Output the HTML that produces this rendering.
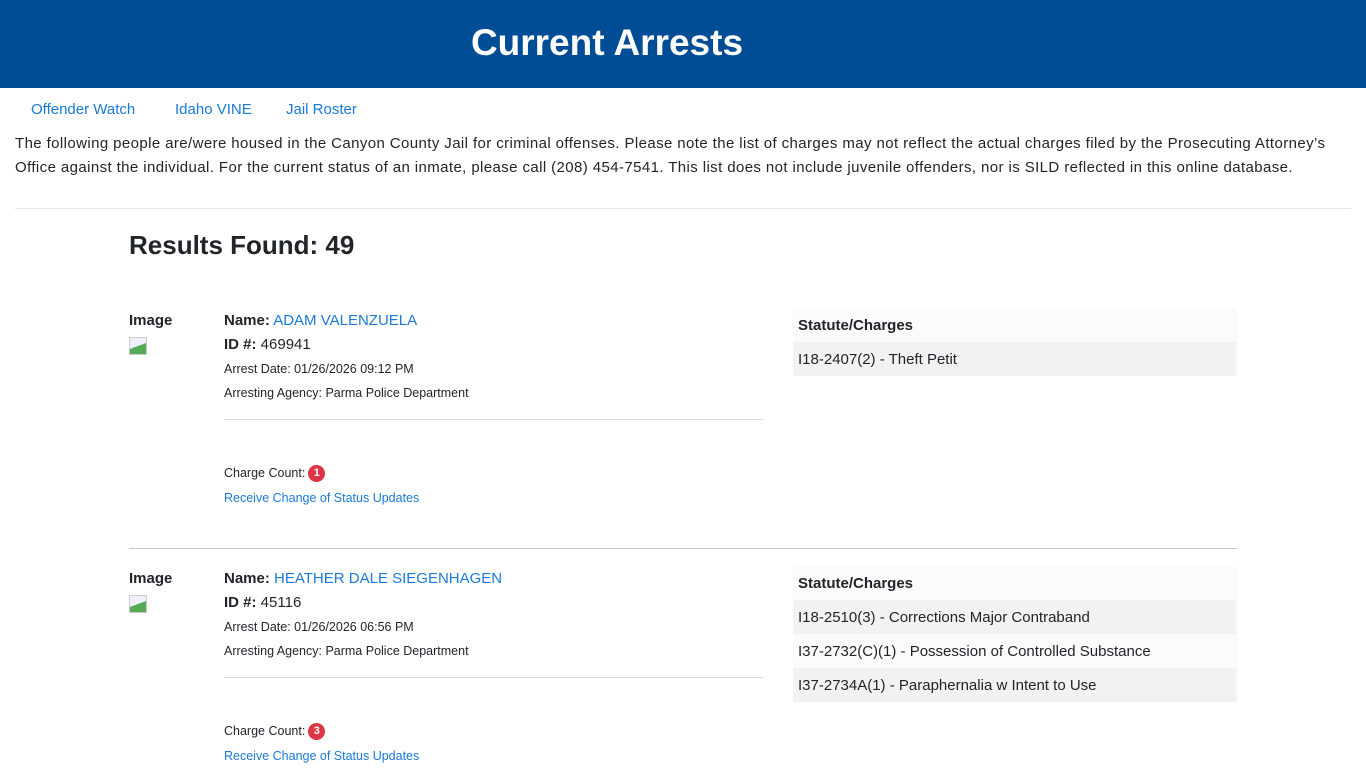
<!DOCTYPE html>
<html><head><meta charset="utf-8"><style>
body{margin:0;width:1366px;height:768px;overflow:hidden;background:#fff;font-family:"Liberation Sans",sans-serif;color:#212529;position:relative}
.a{position:absolute;white-space:nowrap}
.hdr{position:absolute;left:0;top:0;width:1366px;height:88px;background:#004d95}
.link{color:#1a7ad9}
.sm{font-size:12.5px}
.tbl{position:absolute;left:793px;width:444px}
.tbl div{height:34px;line-height:36px;padding-left:5px;font-size:15px;white-space:nowrap}
.g{background:#f2f2f2}.w{background:#fbfbfb}
.badge{display:inline-block;width:17px;height:17px;border-radius:50%;background:#dc3545;color:#fff;font-size:11px;font-weight:bold;text-align:center;line-height:17px;vertical-align:middle;margin-left:3px}
.img{position:absolute;width:16px;height:16px;border:1px solid #ccc;background:linear-gradient(160deg,#eef 50%,#5a5 50%)}
</style></head><body>
<div class="hdr"></div>
<div class="a" style="left:0;width:1214px;text-align:center;top:19px;font-size:37px;font-weight:bold;color:#fff;line-height:48px">Current Arrests</div>
<div class="a link" style="left:31px;top:101px;font-size:15px">Offender Watch</div>
<div class="a link" style="left:175px;top:101px;font-size:15px">Idaho VINE</div>
<div class="a link" style="left:286px;top:101px;font-size:15px">Jail Roster</div>
<div class="a" style="left:15px;top:132px;font-size:15px;line-height:24px;letter-spacing:0.4px">The following people are/were housed in the Canyon County Jail for criminal offenses. Please note the list of charges may not reflect the actual charges filed by the Prosecuting Attorney’s<br>Office against the individual. For the current status of an inmate, please call (208) 454-7541. This list does not include juvenile offenders, nor is SILD reflected in this online database.</div>
<div class="a" style="left:15px;top:208px;width:1336px;border-top:1px solid #e5e5e5"></div>
<div class="a" style="left:129px;top:228px;font-size:26px;font-weight:bold;line-height:34px">Results Found: 49</div>

<div class="a" style="left:129px;top:312px;font-size:15px;font-weight:bold">Image</div>
<div class="img" style="left:129px;top:337px"></div>
<div class="a" style="left:224px;top:312px;font-size:15px"><b>Name:</b> <span class="link">ADAM VALENZUELA</span></div>
<div class="a" style="left:224px;top:336px;font-size:15px"><b>ID #:</b> 469941</div>
<div class="a sm" style="left:224px;top:362px">Arrest Date: 01/26/2026 09:12 PM</div>
<div class="a sm" style="left:224px;top:386px">Arresting Agency: Parma Police Department</div>
<div class="a" style="left:224px;top:419px;width:539px;border-top:1px solid #ddd"></div>
<div class="a sm" style="left:224px;top:465px">Charge Count:<span class="badge">1</span></div>
<div class="a sm link" style="left:224px;top:491px">Receive Change of Status Updates</div>
<div class="tbl" style="top:308px"><div class="w" style="font-weight:bold">Statute/Charges</div><div class="g">I18-2407(2) - Theft Petit</div></div>

<div class="a" style="left:129px;top:548px;width:1108px;border-top:1px solid #c8c8c8"></div>

<div class="a" style="left:129px;top:570px;font-size:15px;font-weight:bold">Image</div>
<div class="img" style="left:129px;top:595px"></div>
<div class="a" style="left:224px;top:570px;font-size:15px"><b>Name:</b> <span class="link">HEATHER DALE SIEGENHAGEN</span></div>
<div class="a" style="left:224px;top:594px;font-size:15px"><b>ID #:</b> 45116</div>
<div class="a sm" style="left:224px;top:620px">Arrest Date: 01/26/2026 06:56 PM</div>
<div class="a sm" style="left:224px;top:644px">Arresting Agency: Parma Police Department</div>
<div class="a" style="left:224px;top:677px;width:539px;border-top:1px solid #ddd"></div>
<div class="a sm" style="left:224px;top:723px">Charge Count:<span class="badge">3</span></div>
<div class="a sm link" style="left:224px;top:749px">Receive Change of Status Updates</div>
<div class="tbl" style="top:566px"><div class="w" style="font-weight:bold">Statute/Charges</div><div class="g">I18-2510(3) - Corrections Major Contraband</div><div class="w">I37-2732(C)(1) - Possession of Controlled Substance</div><div class="g">I37-2734A(1) - Paraphernalia w Intent to Use</div></div>
</body></html>
